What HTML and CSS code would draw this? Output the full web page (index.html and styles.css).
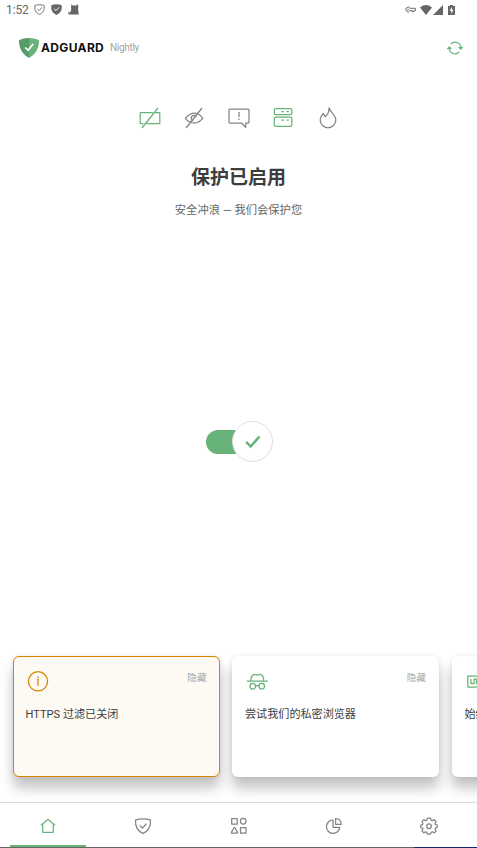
FILE: index.html
```html
<!DOCTYPE html>
<html lang="zh-CN">
<head>
<meta charset="utf-8">
<meta name="viewport" content="width=device-width, initial-scale=1">
<title>AdGuard</title>
<link rel="stylesheet" href="styles.css">
</head>
<body>
<div class="app">
  <div class="status">
    <span class="time">1:52</span>
    <svg class="s-shield" width="11" height="11" viewBox="0 0 11 11"><path d="M.8 1.5Q3 .7 5.5.7T10.2 1.5V4.2C10.2 7.2 8.1 9.3 5.5 10.5 2.9 9.3.8 7.2.8 4.2Z" fill="none" stroke="#777"/><path d="M3.2 4.8 5 6.6 8 3.3" fill="none" stroke="#777"/></svg>
    <svg class="s-shield2" width="11" height="11" viewBox="0 0 11 11"><path d="M.3 1.2Q2.7.2 5.5.2T10.7 1.2V4.2C10.7 7.4 8.3 9.6 5.5 10.9 2.7 9.6.3 7.4.3 4.2Z" fill="#666"/><path d="M3.2 4.8 5 6.6 8 3.3" fill="none" stroke="#fff"/></svg>
    <svg class="s-cat" width="11" height="11" viewBox="0 0 11 11"><path d="M3.4.2 4.8 1.4H8.2L9.8 0 10.4 3.2 10.1 5.2 10.8 10.5H1.8C.8 10.5.1 9.8.2 8.4L1 7.6 1.4 9 2.4 8 3.3 5.3 3 3.5Z" fill="#666"/></svg>
    <span class="spacer"></span>
    <svg class="s-key" width="11" height="7" viewBox="0 0 11 7"><path d="M5.1 2.3A2.3 2.3 0 1 0 5.1 4.6H7.4V5.8H9V4.6H10.3V2.3Z" fill="none" stroke="#666"/><circle cx="3" cy="3.45" r=".8" fill="#666"/></svg>
    <svg class="s-wifi" width="12" height="10" viewBox="0 0 12 10"><path d="M0 2.4Q6-2.2 12 2.4L6 10Z" fill="#666"/></svg>
    <svg class="s-cell" width="10" height="10" viewBox="0 0 10 10"><path d="M10 0V10H0Z" fill="#666"/></svg>
    <svg class="s-batt" width="7" height="10" viewBox="0 0 7 10"><path d="M2 0H5V1H7V10H0V1H2Z" fill="#666"/><path d="M4 2 1.5 5.8H3.2V8.7L5.6 4.8H4Z" fill="#fff"/></svg>
  </div>

  <header class="header">
    <svg class="logo" width="20" height="20" viewBox="0 0 20 20"><path d="M10 0C6.8 0 3 .7 0 2.3 0 5.7 0 14.2 10 20Z" fill="#559c67"/><path d="M10 0C13.2 0 17 .7 20 2.3 20 5.7 20 14.2 10 20Z" fill="#68b27b"/><path d="M6.2 9.5 9.1 12.2 14.2 5.9" fill="none" stroke="#fff" stroke-width="1.7"/></svg>
    <span class="brand">ADGUARD</span>
    <span class="channel">Nightly</span>
    <span class="spacer"></span>
    <svg class="line green" width="16" height="14" viewBox="0 0 16 14"><path d="M3.8 3A5.8 5.8 0 0 1 13.8 7.6M12.2 11A5.8 5.8 0 0 1 2.2 6.4M.4 8 2.2 6 4.4 8M11.6 6 13.8 8 15.6 6"/></svg>
  </header>

  <div class="features">
    <svg class="line green" width="22" height="22" viewBox="0 0 22 22"><path d="M16 5.5H20.2Q20.8 5.5 20.8 6.1V15.9Q20.8 16.5 20.2 16.5H7.5M4.5 16.5H1.8Q1.2 16.5 1.2 15.9V6.1Q1.2 5.5 1.8 5.5H14M19 1 3 21"/></svg>
    <svg class="line" width="22" height="22" viewBox="0 0 22 22"><path d="M2.4 11.3Q6.6 6 11.4 6T19.8 11.3Q15.8 16 11 16 6.3 16 2.4 11.3ZM10.4 13.9A2.8 2.8 0 1 1 13.5 10M19 1 3 21"/></svg>
    <svg class="line" width="22" height="22" viewBox="0 0 22 22"><path d="M2 2H20Q21 2 21 3V15Q21 16 20 16H17.7V20.4L13.5 16H2Q1 16 1 15V3Q1 2 2 2ZM11 5V10M11 11.5V13"/></svg>
    <svg class="line green" width="22" height="22" viewBox="0 0 22 22"><rect x="2.3" y="1.5" width="17.5" height="6" rx="1.6"/><rect x="2.3" y="10" width="17.5" height="9.3" rx="1.6"/><path d="M9.3 4.6H11.8M14.3 4.6H16.8M9.3 13.2H11.8M14.3 13.2H16.8"/></svg>
    <svg class="line" width="22" height="22" viewBox="0 0 22 22"><path d="M12.1.9C12.5 4.7 18.8 7.5 18.8 13A7.8 7.8 0 0 1 3.2 13C3.2 9.8 5.1 8.2 6.2 6.4 7.3 7.3 7.8 8.7 8.2 9.8 10.5 7.6 12.1 4.8 12.1.9Z"/></svg>
  </div>

  <h1 class="title">保护已启用</h1>
  <p class="subtitle">安全冲浪 — 我们会保护您</p>

  <main class="main">
    <div class="switch">
      <div class="knob"><svg width="16" height="14" viewBox="0 0 16 14"><path d="M1.2 6.8 5.7 11.5 14.5 1.5" fill="none" stroke="#67b279" stroke-width="2.5"/></svg></div>
    </div>
  </main>

  <section class="cards">
    <article class="card warning">
      <div class="card-top">
        <svg width="24" height="24" viewBox="0 0 24 24" fill="none" stroke="#d58500" stroke-width="1.3"><circle cx="12" cy="12.3" r="9.6"/><path d="M12 7.3V8.7M11 10.3H12V16.8"/></svg>
        <span class="hide">隐藏</span>
      </div>
      <p class="card-text">HTTPS 过滤已关闭</p>
    </article>
    <article class="card">
      <div class="card-top">
        <svg class="line green" width="24" height="24" viewBox="0 0 24 24"><path d="M1.7 12.2H23M5.8 12C5.8 8 7.5 5.3 9.8 5.3 11 5.3 11.2 5.9 12.3 5.9S13.7 5.3 14.9 5.3C17.2 5.3 18.7 8 18.7 12M10.7 17Q12.3 16 13.9 17"/><circle cx="7.8" cy="17.2" r="2.8"/><circle cx="16.7" cy="17.2" r="2.8"/></svg>
        <span class="hide">隐藏</span>
      </div>
      <p class="card-text">尝试我们的私密浏览器</p>
    </article>
    <article class="card">
      <div class="card-top">
        <svg class="line green" width="24" height="24" viewBox="0 0 24 24"><path d="M2.8 7H23V18H2.8ZM6 10V14.5H9V10H11.5V14.5H14"/></svg>
      </div>
      <p class="card-text">始终</p>
    </article>
  </section>

  <nav class="nav">
    <div class="tab active"><svg class="line green" width="18" height="18" viewBox="0 0 18 18"><path d="M2 8.2 9 2.5 16 8.2M3.7 7V15.3H14.3V7"/></svg></div>
    <div class="tab"><svg class="line" width="18" height="18" viewBox="0 0 18 18"><path d="M1.5 3.2Q4.8 1.8 9 1.8T16.5 3.2C16.9 9.4 14.1 14 9 16.4 3.9 14 1.1 9.4 1.5 3.2ZM5.8 8.5 8.5 11 12.5 6.7"/></svg></div>
    <div class="tab"><svg class="line" width="18" height="18" viewBox="0 0 18 18"><rect x="1.7" y="1.5" width="5.5" height="5.5"/><circle cx="13.2" cy="4.2" r="2.8"/><path d="M3.7 11.2Q4.4 9.8 5.2 11.2L7.4 15.1Q7.8 16.2 6.7 16.2H2.2Q1.1 16.2 1.5 15.1Z"/><rect x="10.5" y="10.7" width="5.5" height="5.5"/></svg></div>
    <div class="tab"><svg class="line" width="18" height="18" viewBox="0 0 18 18"><path d="M8 3A6.7 6.7 0 1 0 14.8 10.3H8ZM10.6 1.5V7.3H16.3Q16 2 10.6 1.5Z"/></svg></div>
    <div class="tab"><svg class="line" width="18" height="18" viewBox="0 0 18 18"><path d="M7.4 1.2H10.6L11.2 3.2 12.3 3.7 14.2 2.6 16.1 4.7 15 6.5 15.4 7.6 17.2 8V10.6L15.4 11.1 15 12.2 16.1 13.8 14.2 15.9 12.3 14.7 11.2 15.2 10.6 17H7.4L6.8 15.2 5.7 14.7 3.8 15.9 1.9 13.8 3 12.2 2.6 11.1.8 10.6V8L2.6 7.6 3 6.5 1.9 4.7 3.8 2.6 5.7 3.7 6.8 3.2Z"/><circle cx="9" cy="9.2" r="2.3"/></svg></div>
  </nav>
  <div class="edge"></div>
</div>
</body>
</html>
```
FILE: styles.css
```css
* { box-sizing: border-box; }
body {
  margin: 0;
  background: #fff;
  color: #3d3d3d;
  font-family: Roboto, "Noto Sans CJK SC", sans-serif;
}
svg { display: block; flex: none; }
.app {
  width: 477px;
  height: 848px;
  display: flex;
  flex-direction: column;
  overflow: hidden;
}
.spacer { flex: 1; }
.line { fill: none; stroke: #838383; stroke-width: 1.25; stroke-linejoin: round; }
.green { stroke: #67b279; }

.status {
  height: 19px;
  padding: 0 22px 0 6px;
  display: flex;
  align-items: center;
  color: #666;
}
.time { width: 28px; padding-top: 1px; font-size: 12px; line-height: 18px; letter-spacing: -0.1px; }
.s-shield2 { margin-left: 6px; }
.s-cat { margin-left: 6px; }
.s-wifi { margin-left: 4px; }
.s-cell { margin-left: 1px; }
.s-batt { margin-left: 5px; }

.header {
  height: 57px;
  padding: 0 14px 0 19px;
  display: flex;
  align-items: center;
}
.brand {
  margin-left: 2px;
  width: 69px;
  font: 700 12px/16px Inter, sans-serif;
  letter-spacing: 0.35px;
  color: #111;
}
.channel { font-size: 10px; letter-spacing: -0.3px; color: #a4a4a4; }

.features {
  margin-top: 31px;
  height: 22px;
  display: flex;
  justify-content: center;
  gap: 22.5px;
}
.title {
  margin: 35px 0 0;
  font-size: 19px;
  line-height: 28px;
  font-weight: 700;
  text-align: center;
}
.subtitle {
  margin: 11px 0 0;
  font-size: 11.3px;
  line-height: 16px;
  text-align: center;
  color: #666;
}
.main {
  flex: 1;
  padding-top: 202px;
  display: flex;
  justify-content: center;
}
.switch {
  width: 67px;
  height: 41px;
  margin-left: 2px;
  display: flex;
  align-items: center;
  justify-content: flex-end;
}
.switch::before {
  content: "";
  width: 40px;
  height: 24px;
  margin-right: -14px;
  border-radius: 12px 0 0 12px;
  background: #67b279;
}
.knob {
  width: 41px;
  height: 41px;
  flex: none;
  display: flex;
  align-items: center;
  justify-content: center;
  border: 1px solid #dedede;
  border-radius: 50%;
  background: #fff;
}

.cards {
  height: 147px;
  padding-left: 12.5px;
  flex: none;
  display: flex;
  gap: 12.5px;
}
.card {
  flex: none;
  width: 207px;
  height: 121px;
  padding: 13px 13px 0;
  border-radius: 6px;
  background: #fff;
  box-shadow: 0 11px 13px rgba(0, 0, 0, 0.24), 0 0 5px rgba(0, 0, 0, 0.08);
}
.warning {
  padding: 12px 12px 0;
  border: 1.2px solid #d58500;
  background: #fdfaf3;
}
.card-top { height: 24px; display: flex; justify-content: space-between; }
.hide {
  font-size: 9.6px;
  line-height: 17px;
  color: #a4a4a4;
}
.card-text {
  margin: 14px 0 0;
  font-size: 11.1px;
  line-height: 16px;
  white-space: nowrap;
}

.nav {
  height: 44px;
  flex: none;
  position: relative;
  display: flex;
  background: #fff;
  box-shadow: 0 -1px 1px #dcdcdc;
}
.tab {
  flex: 1;
  display: flex;
  justify-content: center;
  padding-top: 14px;
}
.active {
  background: linear-gradient(#67b279, #67b279) no-repeat 10px 100% / 76px 2px;
}
.edge {
  height: 1px;
  flex: none;
  background: linear-gradient(90deg, #666 414px, #12266b 414px);
}
```
